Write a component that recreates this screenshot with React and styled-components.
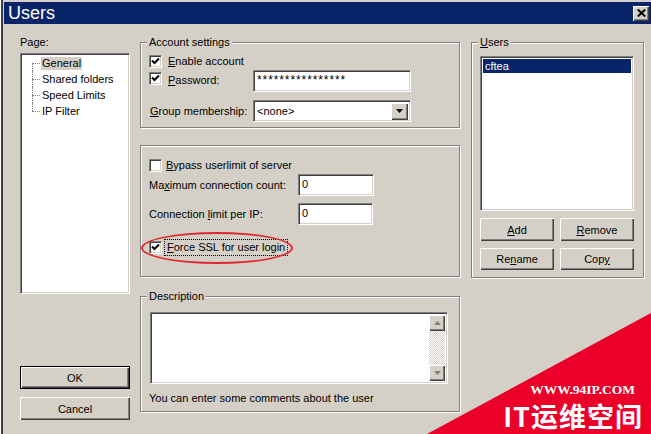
import React from 'react'
import styled, { createGlobalStyle, css } from 'styled-components'

const GlobalStyle = createGlobalStyle`
  html, body {
    margin: 0;
    padding: 0;
    background: #d4d0c8;
  }
  body {
    font-family: "Liberation Sans", Arial, sans-serif;
    font-size: 11px;
    color: #000;
  }
`

// bevels
const sunken = css`
  border: 1px solid;
  border-color: #808080 #fff #fff #808080;
  box-shadow: inset 1px 1px 0 #404040, inset -1px -1px 0 #d4d0c8;
  background: #fff;
`
const raised = css`
  background: #d4d0c8;
  box-shadow: inset 1px 1px 0 #fff, inset -1px -1px 0 #404040, inset -2px -2px 0 #808080;
`

// STYLE
const Window = styled.div`
  position: relative;
  width: 651px;
  height: 434px;
  box-sizing: border-box;
  padding: 2px 0 0 4px;
  overflow: hidden;
  background: #d4d0c8;
  box-shadow: inset 1px 0 0 #fff, inset 3px 0 0 #404040;
`
const TitleBar = styled.div`
  display: flex;
  align-items: center;
  justify-content: space-between;
  height: 22px;
  padding: 0 2px 0 4px;
  background: #0a246a;
`
const Title = styled.span`
  color: #fff;
  font-size: 18px;
  line-height: 22px;
`
const CloseButton = styled.div`
  ${raised};
  width: 16px;
  height: 15px;
  display: flex;
  align-items: center;
  justify-content: center;
`
const Body = styled.div`
  display: flex;
  align-items: flex-start;
  padding: 12px 0 0 16px;
`
const LeftCol = styled.div`
  display: flex;
  flex-direction: column;
  width: 110px;
  margin-right: 10px;
`
const MiddleCol = styled.div`
  display: flex;
  flex-direction: column;
  width: 320px;
  margin-top: 6px;
`
const RightCol = styled.div`
  width: 173px;
  margin: 6px 0 0 11px;
`
const Caption = styled.div`
  line-height: 13px;
  height: 13px;
`
const Tree = styled.div`
  ${sunken};
  height: 241px;
  margin-top: 4px;
  box-sizing: border-box;
  padding: 1px 0 0 1px;
`
const TreeItem = styled.div`
  position: relative;
  height: 16px;
  display: flex;
  align-items: center;
  padding-left: 19px;

  &::before {
    content: '';
    position: absolute;
    left: 10px;
    top: 8px;
    width: 8px;
    border-top: 1px dotted #808080;
  }
  &::after {
    content: '';
    position: absolute;
    left: 10px;
    top: ${p => (p.$first ? '8px' : '0')};
    height: ${p => (p.$first || p.$last ? '8px' : '16px')};
    border-left: 1px dotted #808080;
  }
`
const TreeText = styled.span`
  padding: 0 1px;
  line-height: 13px;
  background: ${p => (p.$selected ? '#d4d0c8' : 'transparent')};
`
const DialogButtons = styled.div`
  display: flex;
  flex-direction: column;
  gap: 8px;
  margin-top: 72px;
`
const Button = styled.div`
  ${raised};
  height: ${p => p.$h || 23}px;
  width: ${p => (p.$w ? `${p.$w}px` : 'auto')};
  display: flex;
  align-items: center;
  justify-content: center;
  box-sizing: border-box;
  ${p =>
    p.$default &&
    css`
      border: 1px solid #000;
    `}
`
const GroupBox = styled.div`
  border: 1px solid #808080;
  box-shadow: inset 1px 1px 0 #fff, 1px 1px 0 #fff;
  padding: ${p => p.$pad};
  margin-top: ${p => p.$mt || 0}px;
  display: flex;
  flex-direction: column;
`
const Legend = styled.span`
  align-self: flex-start;
  margin: -7px 0 0 -2px;
  padding: 0 2px;
  line-height: 13px;
  background: #d4d0c8;
`
const Row = styled.div`
  position: relative;
  display: flex;
  align-items: ${p => p.$align || 'center'};
  height: ${p => p.$h}px;
  margin-top: ${p => p.$mt || 0}px;
`
const FieldLabel = styled.span`
  width: ${p => p.$w}px;
  flex: none;
  padding-left: ${p => p.$pl || 0}px;
  box-sizing: border-box;
`
const CheckBox = styled.div`
  ${sunken};
  width: 13px;
  height: 13px;
  box-sizing: border-box;
  flex: none;
  margin-top: ${p => p.$mt || 0}px;
  display: flex;
  align-items: center;
  justify-content: center;
`
const CheckLabel = styled.span`
  margin-left: ${p => p.$ml || 6}px;
  line-height: 13px;
  margin-top: ${p => p.$mt || 0}px;
  ${p =>
    p.$focus &&
    css`
      outline: 1px dotted #000;
      outline-offset: 1px;
      padding: 0 1px;
    `}
`
const TextField = styled.div`
  ${sunken};
  width: ${p => p.$w}px;
  height: 22px;
  box-sizing: border-box;
  padding: 3px 0 0 3px;
  line-height: 13px;
  letter-spacing: ${p => p.$ls || 0}px;
  font-size: ${p => p.$fs || 11}px;
`
const Select = styled.div`
  ${sunken};
  width: 158px;
  height: 22px;
  box-sizing: border-box;
  display: flex;
  align-items: center;
  justify-content: space-between;
  padding: 2px 2px 2px 3px;
`
const DropButton = styled.div`
  ${raised};
  width: 17px;
  height: 17px;
  display: flex;
  align-items: center;
  justify-content: center;
`
const Ellipse = styled.div`
  position: absolute;
  left: -8px;
  top: -7px;
  width: 148px;
  height: 28px;
  border: 2px solid #e3262d;
  border-radius: 50%;
  pointer-events: none;
`
const Memo = styled.div`
  ${sunken};
  width: 298px;
  height: 72px;
  margin: 9px 0 0 1px;
  box-sizing: border-box;
  display: flex;
  justify-content: flex-end;
  padding: 2px;
`
const ScrollBar = styled.div`
  width: 16px;
  display: flex;
  flex-direction: column;
`
const ScrollTrack = styled.div`
  flex: 1;
  background: repeating-conic-gradient(#d4d0c8 0 25%, #fff 0 50%) 0 0 / 2px 2px;
`
const ScrollButton = styled.div`
  ${raised};
  height: 16px;
  display: flex;
  align-items: center;
  justify-content: center;
`
const Hint = styled.div`
  margin-top: 8px;
  line-height: 13px;
`
const ListBox = styled.div`
  ${sunken};
  height: 155px;
  margin-top: 7px;
  box-sizing: border-box;
  padding: 2px;
`
const ListItem = styled.div`
  height: 14px;
  line-height: 14px;
  padding-left: 2px;
  background: ${p => (p.$selected ? '#0a246a' : 'transparent')};
  color: ${p => (p.$selected ? '#fff' : '#000')};
`
const ButtonRow = styled.div`
  display: flex;
  justify-content: space-between;
  margin-top: 7px;
`
const U = styled.span`
  text-decoration: underline;
`
const Watermark = styled.div`
  position: absolute;
  right: 0;
  bottom: 0;
  width: 224px;
  height: 121px;
  display: flex;
  flex-direction: column;
  align-items: flex-end;
  justify-content: flex-end;
  padding: 0 8px 3px 0;
  box-sizing: border-box;
  color: #fff;

  &::before {
    content: '';
    position: absolute;
    inset: 0;
    background: #eb0029;
    clip-path: polygon(0 100%, 100% 0, 100% 100%);
  }
`
const WmUrl = styled.span`
  position: relative;
  font-family: "Liberation Serif", "DejaVu Serif", serif;
  font-weight: bold;
  font-size: 13.5px;
  line-height: 14px;
  margin-right: 8px;
`
const WmName = styled.span`
  position: relative;
  margin-top: 4px;
  font-family: "Noto Sans CJK SC", sans-serif;
  font-weight: bold;
  font-size: 27px;
  line-height: 30px;
  letter-spacing: 1px;
`

const Check = () => (
  <svg width="9" height="9" viewBox="0 0 9 9">
    <path d="M1 3.5 L3.5 6 L8 1.5" stroke="#000" strokeWidth="2" fill="none" />
  </svg>
)

const Arrow = ({ up, color = '#000' }) => (
  <svg width="7" height="4" viewBox="0 0 7 4">
    <path d={up ? 'M0 4 L3.5 0 L7 4 Z' : 'M0 0 L7 0 L3.5 4 Z'} fill={color} />
  </svg>
)

const pages = ['General', 'Shared folders', 'Speed Limits', 'IP Filter']

const App = () => {
  return (
    <Window>
      <GlobalStyle />
      <TitleBar>
        <Title>Users</Title>
        <CloseButton>
          <svg width="9" height="8" viewBox="0 0 9 8">
            <path d="M0.8 0.5 L8.2 7.5 M8.2 0.5 L0.8 7.5" stroke="#000" strokeWidth="2" />
          </svg>
        </CloseButton>
      </TitleBar>

      <Body>
        <LeftCol>
          <Caption>Page:</Caption>
          <Tree>
            {pages.map((p, i) => (
              <TreeItem key={p} $first={i === 0} $last={i === pages.length - 1}>
                <TreeText $selected={i === 0}>{p}</TreeText>
              </TreeItem>
            ))}
          </Tree>
          <DialogButtons>
            <Button $default>OK</Button>
            <Button>Cancel</Button>
          </DialogButtons>
        </LeftCol>

        <MiddleCol>
          <GroupBox $pad="0 8px 5px 8px">
            <Legend>Account settings</Legend>
            <Row $h={17} $mt={4} $align="flex-start">
              <CheckBox $mt={2}>
                <Check />
              </CheckBox>
              <CheckLabel $mt={2}>
                <U>E</U>nable account
              </CheckLabel>
            </Row>
            <Row $h={22} $align="flex-start">
              <FieldLabel $w={104} style={{ display: 'flex' }}>
                <CheckBox $mt={2}>
                  <Check />
                </CheckBox>
                <CheckLabel $mt={4}>
                  <U>P</U>assword:
                </CheckLabel>
              </FieldLabel>
              <TextField $w={158} $ls={0.9} $fs={12}>****************</TextField>
            </Row>
            <Row $h={22} $mt={8}>
              <FieldLabel $w={104} $pl={1}>
                <U>G</U>roup membership:
              </FieldLabel>
              <Select>
                <span>&lt;none&gt;</span>
                <DropButton>
                  <Arrow />
                </DropButton>
              </Select>
            </Row>
          </GroupBox>

          <GroupBox $pad="11px 8px 20px 8px" $mt={17}>
            <Row $h={17} $align="flex-start">
              <CheckBox $mt={2} />
              <CheckLabel $ml={4} $mt={2}>
                <U>B</U>ypass userlimit of server
              </CheckLabel>
            </Row>
            <Row $h={22}>
              <FieldLabel $w={149}>
                Ma<U>x</U>imum connection count:
              </FieldLabel>
              <TextField $w={76}>0</TextField>
            </Row>
            <Row $h={22} $mt={7}>
              <FieldLabel $w={149}>
                Connection <U>l</U>imit per IP:
              </FieldLabel>
              <TextField $w={75}>0</TextField>
            </Row>
            <Row $h={17} $mt={14} $align="flex-start">
              <CheckBox $mt={2}>
                <Check />
              </CheckBox>
              <CheckLabel $ml={4} $mt={2} $focus>
                <U>F</U>orce SSL for user login
              </CheckLabel>
              <Ellipse />
            </Row>
          </GroupBox>

          <GroupBox $pad="0 8px 6px 8px" $mt={19}>
            <Legend>Description</Legend>
            <Memo>
              <ScrollBar>
                <ScrollButton>
                  <Arrow up color="#808080" />
                </ScrollButton>
                <ScrollTrack />
                <ScrollButton>
                  <Arrow color="#808080" />
                </ScrollButton>
              </ScrollBar>
            </Memo>
            <Hint>You can enter some comments about the user</Hint>
          </GroupBox>
        </MiddleCol>

        <RightCol>
          <GroupBox $pad="0 9px 7px 8px">
            <Legend>
              <U>U</U>sers
            </Legend>
            <ListBox>
              <ListItem $selected>cftea</ListItem>
            </ListBox>
            <ButtonRow>
              <Button $w={74}>
                <span>
                  <U>A</U>dd
                </span>
              </Button>
              <Button $w={74}>
                <span>
                  <U>R</U>emove
                </span>
              </Button>
            </ButtonRow>
            <ButtonRow>
              <Button $w={74} $h={22}>
                <span>
                  Re<U>n</U>ame
                </span>
              </Button>
              <Button $w={74} $h={22}>
                <span>
                  Cop<U>y</U>
                </span>
              </Button>
            </ButtonRow>
          </GroupBox>
        </RightCol>
      </Body>

      <Watermark>
        <WmUrl>WWW.94IP.COM</WmUrl>
        <WmName>IT运维空间</WmName>
      </Watermark>
    </Window>
  )
}

export default App
